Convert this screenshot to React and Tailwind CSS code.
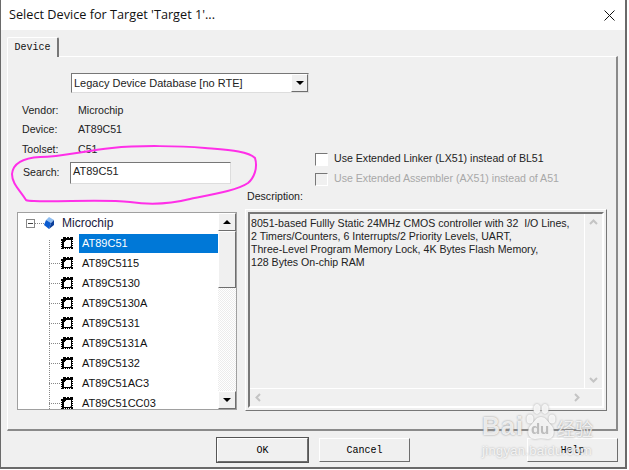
import React from 'react';

const DEVICES = ['AT89C5115', 'AT89C5130', 'AT89C5130A', 'AT89C5131', 'AT89C5131A', 'AT89C5132', 'AT89C51AC3', 'AT89C51CC03'];

const raised = 'border border-t-white border-l-white border-r-[#6e6e6e] border-b-[#6e6e6e]';

function ChipIcon() {
  return (
    <svg width="12" height="12" viewBox="0 0 12 12" shapeRendering="crispEdges" className="shrink-0">
      <path d="M2 0h10v12H0V2h2z" fill="#000" />
      <path d="M3 3h7v7H3z" fill="#fff" />
      <path d="M3 3h2v1H4v1H3z" fill="#000" />
      <path d="M9 9h1v1H9z" fill="#888" />
      <path d="M3 11h1v1H3zM5 11h1v1H5zM7 11h1v1H7zM9 11h1v1H9zM11 3h1v1h-1zM11 5h1v1h-1zM11 7h1v1h-1zM11 9h1v1h-1zM0 4h1v1H0zM0 6h1v1H0zM0 8h1v1H0zM0 10h1v1H0zM5 0h1v1H5zM8 0h1v1H8z" fill="#fff" />
    </svg>
  );
}

function CubeIcon() {
  return (
    <svg width="10" height="12" viewBox="0 0 10 12">
      <path d="M5 0l5 3-3 3-5-3z" fill="#8dbdf2" />
      <path d="M2 3l5 3-2 6-5-4z" fill="#0a5bd0" />
      <path d="M7 6l3-3v5l-5 4z" fill="#0b3f9a" />
    </svg>
  );
}

function ArrowBtn({ down }) {
  return (
    <div className={`h-[18px] shrink-0 bg-[#f0f0f0] flex items-center justify-center ${raised}`}>
      <div className={`w-0 h-0 border-x-4 border-x-transparent ${down ? 'border-t-4 border-t-black' : 'border-b-4 border-b-black'}`} />
    </div>
  );
}

function Chevron({ d, className }) {
  return (
    <svg width="9" height="9" viewBox="0 0 9 9" className={className}>
      <path d={d} fill="none" stroke="#c4c4c4" strokeWidth="2" />
    </svg>
  );
}

function DialogButton({ label, active }) {
  return (
    <button className={`w-[91px] h-[24px] bg-[#f0f0f0] border border-t-white border-l-white border-r-[#6e6e6e] border-b-[#6e6e6e] text-[10px] text-black font-['Liberation_Mono',monospace] ${active ? 'outline outline-1 outline-[#555]' : ''}`}>
      {label}
    </button>
  );
}

function InfoRow({ label, value }) {
  return (
    <div className="flex h-[19.5px] items-center">
      <span className="w-[56px] text-[#222]">{label}</span>
      <span className="text-[#222]">{value}</span>
    </div>
  );
}

function CheckRow({ label, disabled }) {
  return (
    <div className={`flex items-center h-[20px] gap-[6px] ${disabled ? 'text-[#a8a8a8]' : 'text-[#222]'}`}>
      <div className={`w-[13px] h-[13px] border border-t-[#777] border-l-[#777] border-r-white border-b-white ${disabled ? 'bg-[#f0f0f0]' : 'bg-white'}`} />
      <span>{label}</span>
    </div>
  );
}

export default function App() {
  return (
    <div className="relative w-[629px] h-[470px] overflow-hidden bg-white font-['Liberation_Sans',sans-serif] text-[10.6px]">
      <div className="w-[627px] h-[469px] border-l border-r-2 border-b-2 border-[#6a6a6a] bg-[#f0f0f0] flex flex-col">
        {/* title bar */}
        <div className="h-[30px] shrink-0 bg-white flex items-center justify-between pl-[8px] pr-[10px]">
          <span className="font-['Open_Sans',sans-serif] text-[12.7px] text-[#111]">Select Device for Target 'Target 1'...</span>
          <svg width="11" height="11" viewBox="0 0 11 11">
            <path d="M0.5 0.5l10 10M10.5 0.5l-10 10" stroke="#111" strokeWidth="1" />
          </svg>
        </div>

        {/* tab strip */}
        <div className="pl-[6px] pr-[7px] pt-[7px] flex-1 flex flex-col">
          <div className="relative z-10 w-[52px] h-[20px] -mb-px bg-[#f0f0f0] border-t border-l border-t-white border-l-white border-r-2 border-r-[#777] rounded-t-[2px] flex items-center justify-center font-['Liberation_Mono',monospace] text-[10px] text-[#111]">
            Device
          </div>
          <div className="h-[375px] border-t border-l border-t-white border-l-white border-r-2 border-b-2 border-r-[#8a8a8a] border-b-[#8a8a8a] pt-[16px] pl-[9px] pr-[9px]">
            {/* database select */}
            <div className="ml-[54px] w-[238px] h-[20px] flex bg-white border border-t-[#777] border-l-[#777] border-r-[#ddd] border-b-[#ddd]">
              <span className="flex-1 pl-[2px] leading-[18px] text-[11px] text-[#222]">Legacy Device Database [no RTE]</span>
              <div className={`w-[17px] bg-[#f0f0f0] flex items-center justify-center ${raised}`}>
                <div className="w-0 h-0 border-x-4 border-x-transparent border-t-4 border-t-black" />
              </div>
            </div>

            <div className="flex mt-[8px]">
              <div className="w-[228px] shrink-0">
                <div className="pl-[5px]">
                  <InfoRow label="Vendor:" value="Microchip" />
                  <InfoRow label="Device:" value="AT89C51" />
                  <InfoRow label="Toolset:" value="C51" />
                </div>
                <div className="flex items-center pl-[6px] mt-[2.5px]">
                  <span className="w-[47px] text-[#222]">Search:</span>
                  <div className="w-[161px] h-[22px] bg-white border border-t-[#777] border-l-[#777] border-r-[#ddd] border-b-[#ddd] pl-[2px] leading-[17px] text-[11px] text-[#222]">AT89C51</div>
                </div>

                {/* device tree */}
                <div className="mt-[28px] w-[220px] h-[198px] bg-white border border-[#a0a0a0] flex overflow-hidden">
                  <div className="flex-1 relative overflow-hidden">
                    <div className="absolute left-[31px] top-[27px] bottom-0 border-l border-dotted border-[#888]" />
                    <div className="flex items-center h-[20px] pl-[8px]">
                      <div className="w-[9px] h-[9px] border border-[#888] flex items-center justify-center">
                        <div className="w-[5px] h-px bg-[#444]" />
                      </div>
                      <div className="w-[9px] border-t border-dotted border-[#888]" />
                      <CubeIcon />
                      <span className="ml-[8px] text-[12px] text-[#1a1a40]">Microchip</span>
                    </div>
                    <div className="flex items-center h-[20px] pl-[43px]">
                      <ChipIcon />
                      <span className="ml-[6px] flex-1 h-[19px] leading-[19px] pl-[3px] text-[11px] bg-[#0078d7] text-white">AT89C51</span>
                    </div>
                    {DEVICES.map((name) => (
                      <div key={name} className="flex items-center h-[20px] pl-[31px]">
                        <div className="w-[11px] border-t border-dotted border-[#888]" />
                        <div className="ml-[1px]"><ChipIcon /></div>
                        <span className="ml-[9px] text-[11px] text-[#111]">{name}</span>
                      </div>
                    ))}
                  </div>
                  <div className="w-[18px] shrink-0 flex flex-col bg-[repeating-conic-gradient(#ececec_0%_25%,#ffffff_0%_50%)] bg-[length:2px_2px]">
                    <ArrowBtn />
                    <div className={`h-[57px] bg-[#f0f0f0] ${raised}`} />
                    <div className="flex-1" />
                    <ArrowBtn down />
                  </div>
                </div>
              </div>

              {/* right column */}
              <div className="flex-1 pt-[48px]">
                <div className="pl-[70px]">
                  <CheckRow label="Use Extended Linker (LX51) instead of BL51" />
                  <CheckRow label="Use Extended Assembler (AX51) instead of A51" disabled />
                </div>
                <div className="pl-[2px] mt-[1px] h-[19px] leading-[13px] text-[#222]">Description:</div>
                <div className="h-[202px] border border-t-white border-l-white border-r-[#777] border-b-[#777] p-[2px]">
                  <div className="h-full border-2 border-t-[#777] border-l-[#777] border-r-white border-b-white flex flex-col">
                    <div className="flex-1 flex min-h-0 border-b border-white">
                      <div className="flex-1 border-r border-white pl-[1px] pt-[3px] text-[#222] leading-[13px]">
                        <div>8051-based Fullly Static 24MHz CMOS controller with 32&nbsp; I/O Lines,</div>
                        <div>2 Timers/Counters, 6 Interrupts/2 Priority Levels, UART,</div>
                        <div>Three-Level Program Memory Lock, 4K Bytes Flash Memory,</div>
                        <div>128 Bytes On-chip RAM</div>
                      </div>
                      <div className="w-[17px] flex flex-col items-center justify-between py-[4px]">
                        <Chevron d="M1 6l3.5-3.5L8 6" />
                        <Chevron d="M1 3l3.5 3.5L8 3" />
                      </div>
                    </div>
                    <div className="h-[17px] shrink-0 flex items-center justify-between pl-[4px] pr-[21px]">
                      <Chevron d="M6 1L2.5 4.5 6 8" />
                      <Chevron d="M3 1l3.5 3.5L3 8" />
                    </div>
                  </div>
                </div>
              </div>
            </div>
          </div>

          {/* dialog buttons */}
          <div className="flex mt-[7px] pl-[210px]">
            <DialogButton label="OK" active />
            <div className="ml-[11px]"><DialogButton label="Cancel" /></div>
            <div className="ml-auto"><DialogButton label="Help" /></div>
          </div>
        </div>
      </div>

      {/* hand drawn highlight around the search box */}
      <svg width="629" height="470" className="absolute inset-0 pointer-events-none">
        <path
          d="M26 200C20 190 12 184 12 174C13 164 22 158 40 157C62 157 82 151 112 148C140 145 180 146 205 148C228 150 248 151 255 158C258 168 254 178 248 183C238 190 215 194 190 199C170 204 150 205 130 202C105 199 60 202 34 201C30 201 28 201 26 200Z"
          fill="none"
          stroke="#ff2fe8"
          strokeWidth="2"
        />
      </svg>

      {/* watermark */}
      <div className="absolute left-[482px] top-[403px] w-[114px] h-[54px] text-white/80 pointer-events-none">
        <div className="flex items-end h-[37px]">
          <span className="text-[25px] leading-[28px] font-bold tracking-[1px] [text-shadow:0_0_2px_#8a8a8a]">Bai</span>
          <div className="relative w-[33px] h-[37px] shrink-0 drop-shadow-[0_0_1px_#999]">
            <svg width="33" height="37" viewBox="0 0 33 37" className="block">
              <g fill="#fff" fillOpacity="0.85">
                <ellipse cx="6" cy="16" rx="3.5" ry="4.5" />
                <ellipse cx="13" cy="6" rx="3.5" ry="5" />
                <ellipse cx="21" cy="6" rx="3.5" ry="5" />
                <ellipse cx="28" cy="16" rx="3.5" ry="4.5" />
                <path d="M17 14c-5 0-7 5-10 8-5 5-3 14 4 14 3 0 4-1 6-1s4 1 7 1c6 0 8-9 3-14-3-3-5-8-10-8z" />
              </g>
            </svg>
            <span className="absolute left-[7px] bottom-[3px] text-[15px] leading-[16px] font-bold text-[#bdbdbd]">du</span>
          </div>
          <span className="text-[18px] leading-[24px] font-['Noto_Sans_CJK_SC',sans-serif] [text-shadow:0_0_2px_#8a8a8a]">经验</span>
        </div>
        <div className="mt-[4px] text-[13px] leading-[13px] tracking-[0.3px] [text-shadow:0_0_2px_#a0a0a0]">jingyan.baidu.com</div>
      </div>
    </div>
  );
}
